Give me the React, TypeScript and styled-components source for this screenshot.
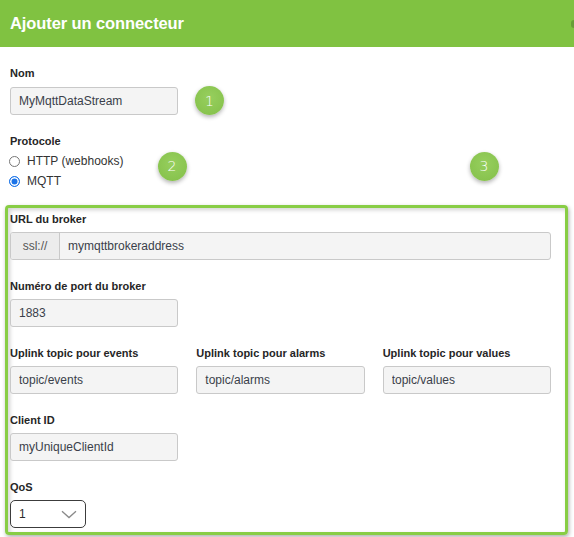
import styled, { createGlobalStyle } from 'styled-components';

const GlobalStyle = createGlobalStyle`
  html, body {
    margin: 0;
    padding: 0;
    background: #ffffff;
  }
  body {
    font-family: "Liberation Sans", Arial, sans-serif;
    color: #2b2b2b;
  }
`;

type FieldProps = { label: string; value: string };

function TextField({ label, value }: FieldProps): JSX.Element {
  return (
    <Field>
      <Label>{label}</Label>
      <Input readOnly value={value} />
    </Field>
  );
}

function App(): JSX.Element {
  return (
    <>
      <GlobalStyle />
      <Page>
        <Header>
          <Title>Ajouter un connecteur</Title>
          <CloseStub />
        </Header>

        <Form>
          <Field>
            <Label>Nom</Label>
            <InlineRow>
              <Input readOnly value="MyMqttDataStream" />
              <Badge>1</Badge>
            </InlineRow>
          </Field>

          <ProtocolField>
            <Label>Protocole</Label>
            <RadioList>
              <RadioRow>
                <Radio />
                HTTP (webhooks)
              </RadioRow>
              <RadioRow>
                <Radio $checked />
                MQTT
              </RadioRow>
            </RadioList>
          </ProtocolField>

          <Highlight>
            <Field>
              <Label>URL du broker</Label>
              <InputGroup>
                <Addon>ssl://</Addon>
                <GroupInput readOnly value="mymqttbrokeraddress" />
              </InputGroup>
            </Field>

            <TextField label="Numéro de port du broker" value="1883" />

            <Columns>
              <TextField label="Uplink topic pour events" value="topic/events" />
              <TextField label="Uplink topic pour alarms" value="topic/alarms" />
              <TextField label="Uplink topic pour values" value="topic/values" />
            </Columns>

            <TextField label="Client ID" value="myUniqueClientId" />

            <LastField>
              <Label>QoS</Label>
              <Select>
                <span>1</span>
                <svg width="16" height="9" viewBox="0 0 16 9" fill="none">
                  <path d="M1 1.2 L8 7.6 L15 1.2" stroke="#8a8a8a" strokeWidth="1.3" />
                </svg>
              </Select>
            </LastField>
          </Highlight>
        </Form>

        <Marker $x={172} $y={166}>2</Marker>
        <Marker $x={484} $y={166}>3</Marker>
      </Page>
    </>
  );
}
export default App;

const Page = styled.div`
  position: relative;
  width: 574px;
  height: 537px;
  overflow: hidden;
  background: #ffffff;
`;

const Header = styled.header`
  height: 47px;
  background: #80c241;
  display: flex;
  align-items: center;
  justify-content: space-between;
  padding-left: 10px;
`;

const Title = styled.h1`
  margin: 0;
  font-size: 16.5px;
  font-weight: 700;
  color: #ffffff;
  letter-spacing: -0.1px;
`;

const CloseStub = styled.span`
  width: 3px;
  height: 8px;
  border-radius: 3px 0 0 3px;
  background: #5d8f32;
  opacity: 0.7;
`;

const Form = styled.div`
  padding: 19px 0 0 0;
  display: flex;
  flex-direction: column;
`;

const Field = styled.div`
  display: flex;
  flex-direction: column;
  gap: 6px;
  margin-bottom: 19px;
  padding-left: 10px;
`;

const ProtocolField = styled(Field)`
  margin-bottom: 14px;
`;

const LastField = styled(Field)`
  margin-bottom: 0;
`;

const Label = styled.div`
  height: 14px;
  line-height: 14px;
  font-size: 11px;
  font-weight: 700;
  color: #262626;
`;

const InlineRow = styled.div`
  display: flex;
  align-items: center;
  gap: 17px;
`;

const Input = styled.input`
  box-sizing: border-box;
  width: 168px;
  height: 28px;
  padding: 0 8px;
  border: 1px solid #c9c9c9;
  border-radius: 3px;
  background: #f4f4f4;
  font-family: "Liberation Sans", Arial, sans-serif;
  font-size: 12px;
  color: #3a3f4a;
  outline: none;
`;

const Badge = styled.span`
  width: 29px;
  height: 29px;
  border-radius: 50%;
  background: radial-gradient(circle at 50% 40%, #97cf5e 0%, #89c44f 70%, #80bc46 100%);
  box-shadow: 0 2px 4px rgba(0, 0, 0, 0.3);
  color: #ffffff;
  font-family: "DejaVu Sans", sans-serif;
  font-size: 14px;
  font-weight: 300;
  display: flex;
  align-items: center;
  justify-content: center;
`;

const Marker = styled(Badge)<{ $x: number; $y: number }>`
  position: absolute;
  left: ${(p) => p.$x - 14.5}px;
  top: ${(p) => p.$y - 14.5}px;
`;

const RadioList = styled.div`
  display: flex;
  flex-direction: column;
  margin-top: -3px;
`;

const RadioRow = styled.label`
  height: 20px;
  display: flex;
  align-items: center;
  gap: 7px;
  font-size: 12px;
  color: #333333;
`;

const Radio = styled.span<{ $checked?: boolean }>`
  box-sizing: border-box;
  width: 11px;
  height: 11px;
  margin-left: -1px;
  border-radius: 50%;
  border: 1px solid ${(p) => (p.$checked ? '#1a73e8' : '#767676')};
  background: ${(p) => (p.$checked ? '#1a73e8' : '#ffffff')};
  box-shadow: ${(p) => (p.$checked ? 'inset 0 0 0 1.5px #ffffff' : 'none')};
`;

const Highlight = styled.section`
  box-sizing: border-box;
  width: 563px;
  margin: 0 0 0 5px;
  padding: 4px 14px 4px 0;
  border: 3px solid #88cd45;
  border-radius: 4px;
  box-shadow: 1px 2px 4px rgba(0, 0, 0, 0.32), inset 2px 2px 4px rgba(0, 0, 0, 0.18);

  ${Field} {
    padding-left: 2px;
  }
`;

const InputGroup = styled.div`
  display: flex;
  height: 28px;
  box-sizing: border-box;
  border: 1px solid #c9c9c9;
  border-radius: 3px;
  background: #f4f4f4;
  overflow: hidden;
`;

const Addon = styled.span`
  width: 48px;
  display: flex;
  align-items: center;
  justify-content: center;
  background: #ececec;
  border-right: 1px solid #c9c9c9;
  font-size: 12px;
  color: #555555;
`;

const GroupInput = styled.input`
  flex: 1;
  border: 0;
  padding: 0 8px;
  background: transparent;
  font-family: "Liberation Sans", Arial, sans-serif;
  font-size: 12px;
  color: #3a3f4a;
  outline: none;
`;

const Columns = styled.div`
  display: grid;
  grid-template-columns: repeat(3, 1fr);
  column-gap: 18px;
  margin-left: 2px;

  ${Field} {
    padding-left: 0;
  }
  ${Input} {
    width: 100%;
  }
`;

const Select = styled.div`
  box-sizing: border-box;
  width: 76px;
  height: 28px;
  border: 1px solid #3c3c3c;
  border-radius: 5px;
  background: #ffffff;
  display: flex;
  align-items: center;
  justify-content: space-between;
  padding: 0 8px 0 8px;
  font-size: 12px;
  color: #2b2b2b;
`;
